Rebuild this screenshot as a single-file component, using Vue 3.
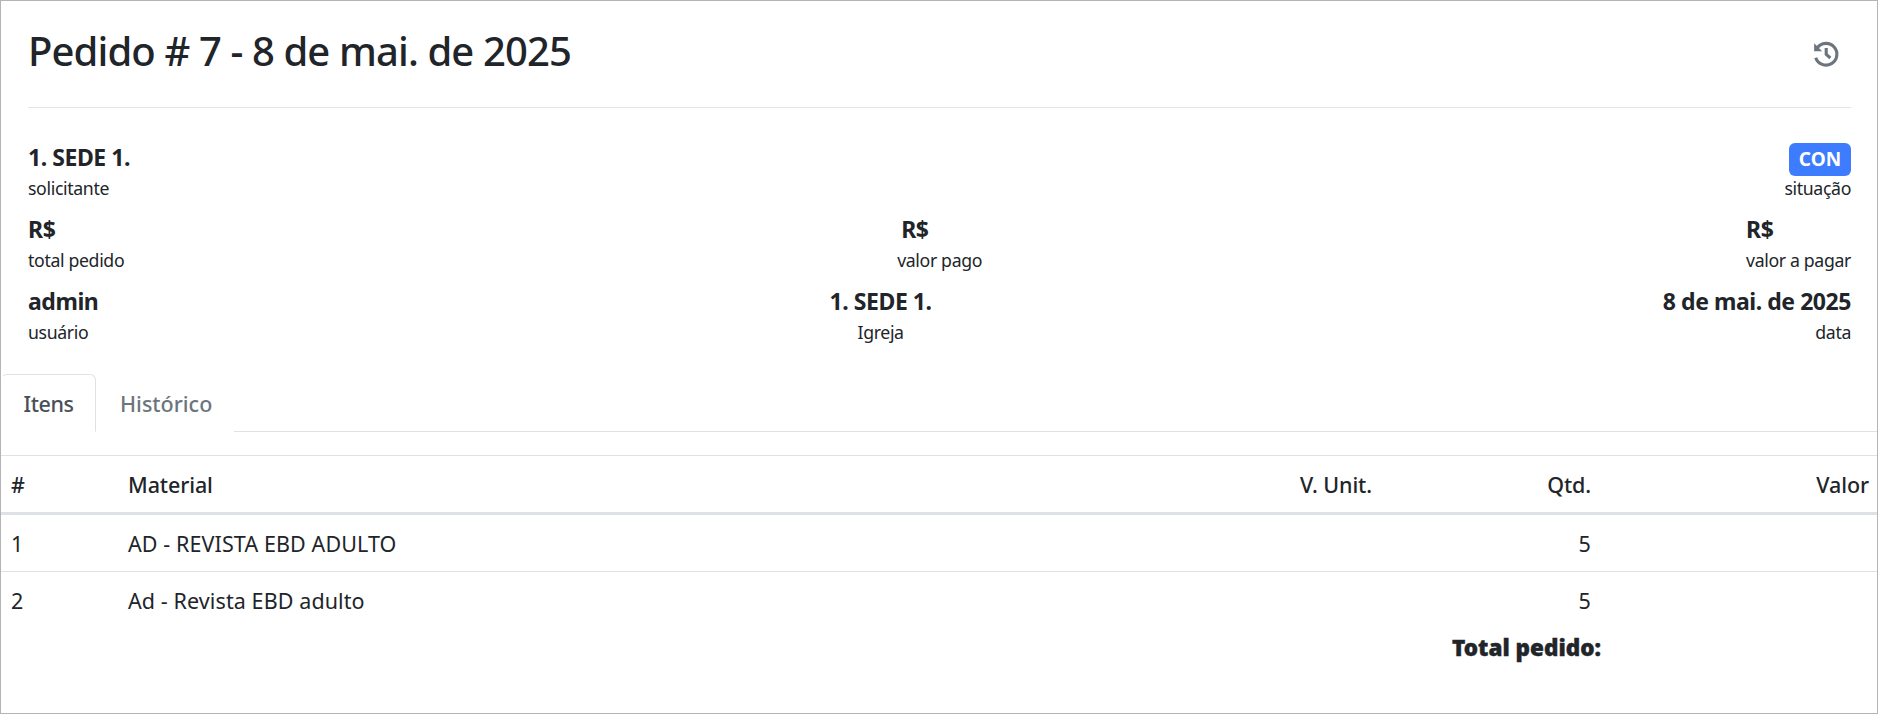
<script setup>
const infoRows = [
  [
    { value: '1. SEDE 1.', label: 'solicitante', align: 'left' },
    { badge: 'CON', label: 'situação', align: 'right' },
  ],
  [
    { value: 'R$', label: 'total pedido', align: 'left' },
    { value: 'R$', label: 'valor pago', align: 'left', indent: true },
    { value: 'R$', label: 'valor a pagar', align: 'left' },
  ],
  [
    { value: 'admin', label: 'usuário', align: 'left' },
    { value: '1. SEDE 1.', label: 'Igreja', align: 'center' },
    { value: '8 de mai. de 2025', label: 'data', align: 'right' },
  ],
]
const items = [
  { id: 1, name: 'AD - REVISTA EBD ADULTO', qty: 5 },
  { id: 2, name: 'Ad - Revista EBD adulto', qty: 5 },
]
</script>

<template>
  <div class="page">
    <header class="head">
      <h1>Pedido # 7 - 8 de mai. de 2025</h1>
      <svg class="history" viewBox="0 0 24 24" width="29" height="29" fill="none" stroke="#6c757d" stroke-width="2.6">
        <path d="M5.2 7.2A9 9 0 1 1 3.9 15.5" />
        <path d="M12.6 7.5v5.2l3.4 3" />
        <path d="M2.6 3.6v6.6h6.6z" fill="#6c757d" stroke="none" />
      </svg>
    </header>
    <section class="info">
      <div v-for="(row, r) in infoRows" :key="r" class="info-row">
        <div v-for="cell in row" :key="cell.label" class="cell" :class="[cell.align, { indent: cell.indent }]">
          <div v-if="cell.badge" class="badge-line"><span class="badge">{{ cell.badge }}</span></div>
          <div v-else class="value">{{ cell.value }}</div>
          <div class="label">{{ cell.label }}</div>
        </div>
      </div>
    </section>
    <nav class="tabs">
      <span class="tab active">Itens</span>
      <span class="tab">Histórico</span>
      <span class="tab-line"></span>
    </nav>
    <table class="grid">
      <colgroup>
        <col class="c1" /><col /><col class="c3" /><col class="c4" /><col class="c5" />
      </colgroup>
      <thead>
        <tr>
          <th>#</th>
          <th>Material</th>
          <th class="num">V. Unit.</th>
          <th class="num">Qtd.</th>
          <th class="num">Valor</th>
        </tr>
      </thead>
      <tbody>
        <tr v-for="item in items" :key="item.id">
          <td>{{ item.id }}</td>
          <td>{{ item.name }}</td>
          <td></td>
          <td class="num">{{ item.qty }}</td>
          <td></td>
        </tr>
      </tbody>
    </table>
    <div class="total"><strong>Total pedido:</strong></div>
  </div>
</template>

<style>
html, body { margin: 0; background: #fff; }
</style>

<style scoped>
.page {
  box-sizing: border-box;
  width: 1878px;
  height: 714px;
  border: 1px solid #b4b4b4;
  font-family: "Noto Sans", "Open Sans", sans-serif;
  color: #212529;
  background: #fff;
  overflow: hidden;
}
.head {
  margin: 0 26px 0 27px;
  height: 106px;
  border-bottom: 1px solid #e5e5e5;
  display: flex;
  justify-content: space-between;
  align-items: flex-start;
}
h1 {
  margin: 24px 0 0;
  font-size: 40px;
  line-height: 52px;
  font-weight: 500;
  letter-spacing: -0.88px;
}
.history { margin: 38px 11px 0 0; }
.info {
  margin: 0 26px 0 27px;
  padding-top: 35px;
  display: flex;
  flex-direction: column;
  gap: 13px;
}
.info-row {
  display: flex;
  justify-content: space-between;
  height: 59px;
}
.cell.left { text-align: left; }
.cell.center { text-align: center; }
.cell.right { text-align: right; }
.cell.indent { margin-left: 9px; }
.value {
  font-size: 23px;
  line-height: 29px;
  margin-bottom: 3px;
  font-weight: 700;
  letter-spacing: -0.45px;
}
.label {
  font-size: 17.7px;
  line-height: 27px;
  letter-spacing: -0.35px;
}
.indent .value { padding-left: 4px; }
.badge-line { height: 32px; display: flex; justify-content: flex-end; align-items: flex-start; }
.badge {
  box-sizing: border-box;
  width: 62px;
  height: 33px;
  border-radius: 6px;
  background: #3d7bff;
  color: #fff;
  font-size: 19px;
  line-height: 33px;
  font-weight: 700;
  text-align: center;
}
.tabs {
  display: flex;
  align-items: flex-end;
  margin-top: 28px;
  height: 58px;
}
.tab {
  box-sizing: border-box;
  height: 58px;
  padding: 0 21px 0 23px;
  font-size: 21.5px;
  line-height: 57px;
  font-weight: 500;
  color: #6c757d;
  border: 1px solid transparent;
}
.tab.active {
  width: 95px;
  padding: 0;
  text-align: center;
  color: #495057;
  letter-spacing: -0.4px;
  border-color: #dee2e6 #dee2e6 transparent;
  border-radius: 6px 6px 0 0;
  border-left-color: transparent;
}
.tab-line { flex: 1; border-bottom: 1px solid #dee2e6; }
.grid {
  width: 100%;
  margin-top: 23px;
  border-collapse: collapse;
  table-layout: fixed;
  border-top: 1px solid #dee2e6;
  font-size: 21.5px;
  letter-spacing: -0.1px;
}
.c1 { width: 117px; }
.c3 { width: 191px; }
.c4 { width: 219px; }
.c5 { width: 278px; }
th, td {
  padding: 0 8px 0 10px;
  text-align: left;
}
th {
  height: 56px;
  font-weight: 500;
  border-bottom: 3px solid #dee2e6;
}
td { height: 56px; border-bottom: 1px solid #dee2e6; letter-spacing: 0.1px; }
tbody tr:last-child td { border-bottom: 0; }
.num { text-align: right; }
.total {
  margin-top: 5px;
  width: 1600px;
  text-align: right;
  font-size: 22.5px;
  line-height: 30px;
}
.total strong { font-weight: 900; -webkit-text-stroke: 0.4px #212529; }
</style>
